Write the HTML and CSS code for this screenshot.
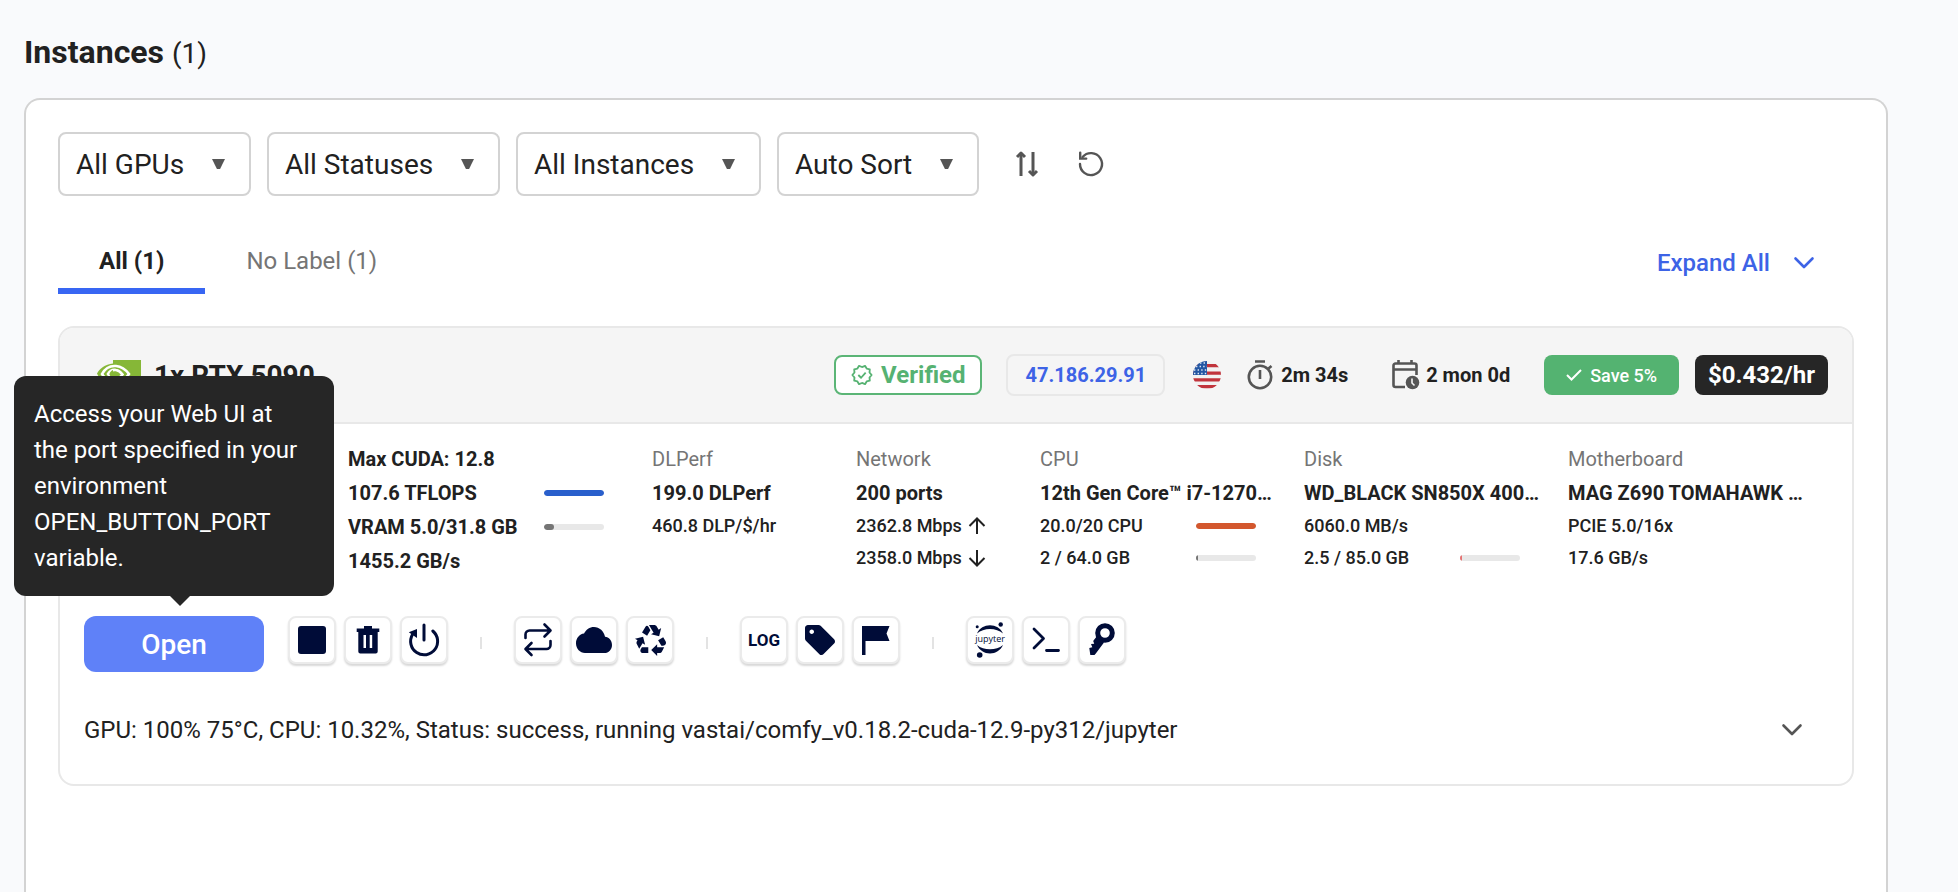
FILE: index.html
```html
<!DOCTYPE html>
<html lang="en">
<head>
  <meta charset="UTF-8">
  <meta name="viewport" content="width=device-width, initial-scale=1.0">
  <title>Instances</title>
  <link rel="stylesheet" href="styles.css">
</head>
<body>
  <h1>Instances <span class="count">(1)</span></h1>

  <main class="panel">
    <!-- Filters -->
    <div class="filters">
      <div class="select"><select aria-label="GPU"><option>All GPUs</option></select></div>
      <div class="select"><select aria-label="Status"><option>All Statuses</option></select></div>
      <div class="select"><select aria-label="Instance type"><option>All Instances</option></select></div>
      <div class="select"><select aria-label="Sort"><option>Auto Sort</option></select></div>
      <button class="tool-btn" aria-label="Reverse order">
        <svg width="24" height="26" viewBox="0 0 24 26" fill="none" stroke="#555" stroke-width="3"><path d="M6 25V3M18 1v22"/><path d="M2 6l4-4 4 4M14 20l4 4 4-4" stroke-linejoin="round"/></svg>
      </button>
      <button class="tool-btn" aria-label="Refresh">
        <svg width="26" height="26" viewBox="0 0 26 26" fill="none" stroke="#555" stroke-width="2.4" stroke-linecap="round"><path d="M2 13a11 11 0 1 0 2.6-7"/><path d="M2.2 1.6v6h6" /></svg>
      </button>
    </div>

    <!-- Tabs -->
    <div class="tabs">
      <button class="tab active">All (1)</button>
      <button class="tab">No Label (1)</button>
      <button class="expand">Expand All
        <svg width="20" height="12" viewBox="0 0 20 12" fill="none" stroke="currentColor" stroke-width="2.6" stroke-linecap="round" stroke-linejoin="round"><path d="M1.5 1.5L10 10l8.500-8.500"/></svg>
      </button>
    </div>

    <article class="card">
      <header class="card-header">
        <svg class="nvidia" width="44" height="30" viewBox="0 0 44 30">
          <path d="M16 0h28v30H16z" fill="#86b737"/>
          <path d="M16 3.500C8 4 2.500 9 0 13.500 3 20 9 26 16 27z" fill="#86b737"/>
          <g fill="none" stroke="#fff" stroke-width="2.600">
            <path d="M5 14C8 8.500 13 5.500 19 6c6 .5 10 4 13 8-4 6-9 9-14 9-6 0-10-4-13-9z"/>
            <path d="M11 14c2-3.500 5-4.500 8-4 3.500.5 5 2.500 6.500 4.500-2 3-4.500 4-7 4-4 0-6-2-7.500-4.500z"/>
          </g>
          <path d="M16 10v8c-2-.5-3-2-3.500-4 .5-2 2-3.500 3.500-4z" fill="#86b737"/>
        </svg>
        <h2>1x RTX 5090</h2>

        <span class="verified">
          <svg width="22" height="22" viewBox="0 0 24 24" fill="none" stroke="currentColor" stroke-width="2" stroke-linejoin="round"><path d="M22.500 12l-2.300-2.700.3-3.500-3.400-.8-1.800-3L12 3.300 8.800 2 7 5l-3.500.8.3 3.500L1.500 12l2.300 2.700-.3 3.500 3.500.8 1.800 3 3.200-1.300 3.300 1.300 1.800-3 3.400-.8-.3-3.500z"/><path d="M8 12l3 3 5-5.500"/></svg>
          Verified
        </span>
        <a class="ip" href="#">47.186.29.91</a>
        <svg class="us-flag" width="28" height="28" viewBox="0 0 28 28">
          <clipPath id="disc"><circle cx="14" cy="14" r="14"/></clipPath>
          <g clip-path="url(#disc)">
            <path d="M0 0h28v28H0z" fill="#f2f2f2"/>
            <path d="M0 4.700h28M0 12.200h28M0 18.900h28M0 25.600h28" stroke="#c1343c" stroke-width="3.300"/>
            <path d="M0 0h14v14H0z" fill="#2457a3"/>
            <path d="M3 5.500h11M1 9h13M1 12.500h13M7 2h7" stroke="#dfe8f5" stroke-width="1.400" stroke-dasharray="1.400 2.200"/>
          </g>
        </svg>
        <span class="time uptime">
          <svg width="28" height="30" viewBox="0 0 28 30" fill="none" stroke="#555" stroke-width="2.600"><circle cx="13" cy="17" r="11.200"/><path d="M8 1.500h10M13 10v9M21.500 8.500l3-2.500"/></svg>
          2m 34s
        </span>
        <span class="time left">
          <svg width="28" height="30" viewBox="0 0 28 30" fill="none" stroke="#555"><path d="M13 27H3.500a2 2 0 0 1-2-2V5.500a2 2 0 0 1 2-2h19a2 2 0 0 1 2 2V15" stroke-width="2.600"/><path d="M1.500 9.500h23M6.500 0v4M19.500 0v4" stroke-width="2.600"/><circle cx="20.500" cy="22.500" r="6.800" fill="#555" stroke="none"/><path d="M20 18.500v4.500l2.500 2.500" stroke="#f5f5f5" stroke-width="1.600"/></svg>
          2 mon 0d
        </span>
        <button class="save">
          <svg width="16" height="12" viewBox="0 0 16 12" fill="none" stroke="currentColor" stroke-width="2"><path d="M1 6l4.500 4.500L15 1"/></svg>
          Save 5%
        </button>
        <span class="price">$0.432/hr</span>
      </header>

      <div class="stats">
        <div class="stat gpu">
          <p class="strong">Max CUDA: 12.8</p>
          <p class="strong">107.6 TFLOPS <span class="bar"><i class="blue" style="width:100%"></i></span></p>
          <p class="strong">VRAM 5.0/31.8 GB <span class="bar"><i class="grey" style="width:16%"></i></span></p>
          <p class="strong">1455.2 GB/s</p>
        </div>
        <div class="stat">
          <p class="name">DLPerf</p>
          <p class="strong">199.0 DLPerf</p>
          <p>460.8 DLP/$/hr</p>
        </div>
        <div class="stat network">
          <p class="name">Network</p>
          <p class="strong">200 ports</p>
          <p>2362.8 Mbps <svg width="18" height="18" viewBox="0 0 18 18" fill="none" stroke="currentColor" stroke-width="2"><path d="M9 17V2M1.500 9L9 1.500 16.500 9"/></svg></p>
          <p>2358.0 Mbps <svg width="18" height="18" viewBox="0 0 18 18" fill="none" stroke="currentColor" stroke-width="2"><path d="M9 1v15M1.500 9L9 16.500 16.500 9"/></svg></p>
        </div>
        <div class="stat">
          <p class="name">CPU</p>
          <p class="strong">12th Gen Core™ i7-1270…</p>
          <p>20.0/20 CPU <span class="bar"><i class="orange" style="width:100%"></i></span></p>
          <p>2 / 64.0 GB <span class="bar"><i class="grey" style="width:3%"></i></span></p>
        </div>
        <div class="stat">
          <p class="name">Disk</p>
          <p class="strong">WD_BLACK SN850X 400…</p>
          <p>6060.0 MB/s</p>
          <p>2.5 / 85.0 GB <span class="bar"><i class="red" style="width:3%"></i></span></p>
        </div>
        <div class="stat">
          <p class="name">Motherboard</p>
          <p class="strong">MAG Z690 TOMAHAWK …</p>
          <p>PCIE 5.0/16x</p>
          <p>17.6 GB/s</p>
        </div>
      </div>

      <div class="actions">
        <div class="open-wrap">
          <button class="open" aria-describedby="open-tip">Open</button>
          <div class="tooltip" id="open-tip" role="tooltip">Access your Web UI at the port specified in your environment OPEN_BUTTON_PORT variable.</div>
        </div>

        <div class="group">
          <button class="icon-btn" aria-label="Stop">
            <svg width="32" height="32" viewBox="0 0 32 32"><rect x="2" y="2" width="28" height="28" rx="3"/></svg>
          </button>
          <button class="icon-btn" aria-label="Destroy">
            <svg width="32" height="32" viewBox="0 0 32 32"><path fill-rule="evenodd" d="M12 2h8v2.500h7.300V8h-1.600v19.500a2 2 0 0 1-2 2H8.300a2 2 0 0 1-2-2V8H4.700V4.500H12zM11.500 11v13H14V11zM17.700 11v13h2.500V11z"/></svg>
          </button>
          <button class="icon-btn" aria-label="Reboot">
            <svg width="32" height="32" viewBox="0 0 32 32"><g fill="none" stroke="#000c38" stroke-width="3" stroke-linecap="round"><path d="M16 1v15M24.800 7A13.500 13.500 0 1 1 4.500 10.500"/></g><path d="M.8 8.300L9 5v9z"/></svg>
          </button>
        </div>
        <span class="divider"></span>
        <div class="group">
          <button class="icon-btn" aria-label="Recreate">
            <svg width="32" height="32" viewBox="0 0 32 32"><g fill="none" stroke="#000c38" stroke-width="2.600" stroke-linecap="round" stroke-linejoin="round"><path d="M3.500 14v-3.500a4 4 0 0 1 4-4H28M22.500 0.500l6 6-6 6M28.500 17v4a4 4 0 0 1-4 4H4M9.500 19l-6 6 6 6"/></g></svg>
          </button>
          <button class="icon-btn" aria-label="Cloud copy">
            <svg width="36" height="26" viewBox="0 4 24 16" preserveAspectRatio="none"><path d="M19.350 10.040C18.670 6.590 15.640 4 12 4 9.110 4 6.600 5.640 5.350 8.040 2.340 8.360 0 10.910 0 14c0 3.310 2.690 6 6 6h13c2.760 0 5-2.240 5-5 0-2.640-2.050-4.780-4.650-4.960z"/></svg>
          </button>
          <button class="icon-btn" aria-label="Recycle">
            <svg width="31" height="31" viewBox="1 2 21 21"><path d="M5.770 7.150L7.200 4.780l1.030-1.710c.39-.65 1.330-.65 1.720 0l1.480 2.460-1.230 2.060-1 1.620-3.430-2.060zm15.950 5.820l-1.600-2.660-3.460 2L18.870 16H20c.76 0 1.450-.43 1.790-1.110.14-.28.21-.58.21-.89 0-.36-.1-.71-.28-1.030zM16 21h1.500c.76 0 1.450-.43 1.790-1.110L20.740 17H16v-2l-4 4 4 4v-2zm-6-4H5.700l-.84 1.410c-.3.5-.32 1.120-.06 1.650.28.57.87.94 1.520.94H10v-4zm-3.880-2.650l1.730 1.040L6.480 9.900 1 11.270l1.700 1.020-.41.69c-.35.59-.38 1.310-.07 1.920l1.630 3.260 2.270-3.810zm10.900-9.210l-1.300-2.170C15.350 2.370 14.700 2 14 2h-3.530l3.120 5.200-1.720 1.030 5.490 1.370 1.370-5.490-1.710 1.030z"/></svg>
          </button>
        </div>
        <span class="divider"></span>
        <div class="group">
          <button class="icon-btn log">LOG</button>
          <button class="icon-btn" aria-label="Label">
            <svg width="30" height="30" viewBox="2 2 20 20"><path d="M21.410 11.580l-9-9C12.050 2.220 11.550 2 11 2H4c-1.100 0-2 .9-2 2v7c0 .55.22 1.050.59 1.420l9 9c.36.36.86.58 1.410.58.55 0 1.050-.22 1.410-.59l7-7c.37-.36.59-.86.59-1.410 0-.55-.23-1.060-.59-1.420zM6.500 8C5.670 8 5 7.330 5 6.500S5.670 5 6.500 5 8 5.670 8 6.500 7.330 8 6.500 8z"/></svg>
          </button>
          <button class="icon-btn" aria-label="Report">
            <svg width="32" height="32" viewBox="0 0 32 32"><path d="M2 2h27.500l-3 7.500 3 7.500H5.500v14H2z"/></svg>
          </button>
        </div>
        <span class="divider"></span>
        <div class="group">
          <button class="icon-btn" aria-label="Jupyter">
            <svg width="32" height="32" viewBox="0 0 32 32"><circle cx="3.200" cy="2.800" r="1.500"/><circle cx="26.700" cy="0.500" r="2.200"/><circle cx="5.700" cy="31" r="2.800"/><path d="M3 9.500C5.500 4 10.500 1.300 16 1.300S26.500 4 29 9.500C25.500 6.500 21 5 16 5S6.500 6.500 3 9.500zM3 21c2.500 5.500 7.500 8.500 13 8.500S26.500 26.500 29 21c-3.500 3-8 4.300-13 4.300S6.500 24 3 21z"/><text x="16" y="17.500" text-anchor="middle" class="jupyter">jupyter</text></svg>
          </button>
          <button class="icon-btn" aria-label="Terminal">
            <svg width="32" height="32" viewBox="0 0 32 32"><path d="M4 5l9.500 9.500L4 24M16.500 26.500H28.500" fill="none" stroke="#000c38" stroke-width="2.800" stroke-linecap="round" stroke-linejoin="round"/></svg>
          </button>
          <button class="icon-btn" aria-label="SSH keys">
            <svg width="32" height="32" viewBox="0 0 32 32"><circle cx="19" cy="9" r="7.300" fill="none" stroke="#000c38" stroke-width="5"/><path d="M11 12l7 6.500L9.800 29.500l-1.300 1.500H4.300l-1-7 3-.8-1.300-3.200 3.200-.3-1-2.700z"/></svg>
          </button>
        </div>
      </div>

      <div class="status">
        <span>GPU: 100% 75°C, CPU: 10.32%, Status: success, running vastai/comfy_v0.18.2-cuda-12.9-py312/jupyter</span>
        <button class="toggle" aria-label="Show details">
          <svg width="20" height="12" viewBox="0 0 20 12" fill="none" stroke="#555" stroke-width="2.600" stroke-linecap="round" stroke-linejoin="round"><path d="M1.500 1.500L10 10l8.500-8.500"/></svg>
        </button>
      </div>
    </article>
  </main>
</body>
</html>
```
FILE: styles.css
```css
* {
  box-sizing: border-box;
}

body {
  margin: 0;
  min-height: 100vh;
  padding: 32px 70px 0 24px;
  display: flex;
  flex-direction: column;
  background-color: #f9fafc;
  color: #212121;
  font-family: Roboto, sans-serif;
  font-size: 24px;
}

button, select {
  font: inherit;
  color: inherit;
  cursor: pointer;
}

button {
  padding: 0;
  border: none;
  background: none;
}

svg {
  display: block;
  flex: none;
  overflow: visible;
}

h1, h2, p {
  margin: 0;
}

h1 {
  margin-bottom: 26px;
  font-size: 32px;
  line-height: 40px;
}

.count {
  font-size: 28px;
  line-height: 28px;
  font-weight: 400;
}

.panel {
  flex: 1;
  padding: 32px;
  border: 2px solid #d3d3d3;
  border-bottom: none;
  border-radius: 16px 16px 0 0;
  background-color: #fff;
}

/* Filters */
.filters {
  display: flex;
  align-items: center;
  gap: 16px;
}

.select {
  display: flex;
  position: relative;
}

.select select {
  height: 64px;
  padding: 0 64px 0 16px;
  border: 2px solid #d3d3d3;
  border-radius: 8px;
  background-color: #fff;
  appearance: none;
  font-size: 28px;
}

.select::after {
  content: "";
  position: absolute;
  top: 27px;
  right: 26px;
  width: 13px;
  height: 10px;
  background-color: #555;
  clip-path: polygon(0 0, 100% 0, 62% 100%, 38% 100%);
  pointer-events: none;
}

.tool-btn {
  display: flex;
  justify-content: center;
  width: 48px;
}

.tool-btn:first-of-type {
  margin-left: 8px;
}

/* Tabs */
.tabs {
  display: flex;
  margin: 36px 0 32px;
}

.tab {
  height: 62px;
  padding: 2px 41px 0;
  border-bottom: 6px solid transparent;
  color: #757575;
}

.tab.active {
  border-bottom-color: #3866f3;
  color: #212121;
  font-weight: 700;
}

.expand {
  display: flex;
  align-items: center;
  gap: 24px;
  margin-left: auto;
  margin-right: 40px;
  color: #3d63e6;
  font-weight: 500;
}

/* Instance card */
.card {
  padding-bottom: 36px;
  border: 2px solid #e8e8e8;
  border-radius: 16px;
}

.card-header {
  display: flex;
  align-items: center;
  height: 96px;
  padding: 0 24px 0 37px;
  border-bottom: 2px solid #e8e8e8;
  border-radius: 14px 14px 0 0;
  background-color: #f5f5f5;
}

h2 {
  margin-left: 13px;
  font-size: 28px;
  font-weight: 700;
}

.verified {
  display: flex;
  align-items: center;
  gap: 8px;
  height: 40px;
  margin-left: auto;
  padding: 0 15px;
  border: 2px solid #5bb576;
  border-radius: 8px;
  background-color: #fff;
  color: #56b272;
  font-weight: 700;
}

.ip {
  margin-left: 24px;
  padding: 0 17px;
  border: 2px solid #e8e8e8;
  border-radius: 8px;
  color: #3d63e6;
  font-size: 20px;
  font-weight: 700;
  line-height: 38px;
  text-decoration: none;
}

.us-flag {
  margin-left: 28px;
}

.time {
  display: flex;
  align-items: center;
  gap: 6px;
  font-size: 20px;
  font-weight: 700;
}

.uptime {
  margin-left: 26px;
}

.left {
  margin-left: 44px;
}

.save {
  display: flex;
  align-items: center;
  gap: 8px;
  height: 40px;
  margin-left: 34px;
  padding: 0 22px;
  border-radius: 8px;
  background-color: #54b371;
  color: #fff;
  font-size: 18px;
  font-weight: 500;
}

.price {
  margin-left: 16px;
  padding: 0 13px;
  border-radius: 8px;
  background-color: #262626;
  color: #fff;
  font-weight: 700;
  line-height: 40px;
}

/* Specs */
.stats {
  display: grid;
  grid-template-columns: 264fr 304fr 204fr 184fr 264fr 264fr 260fr;
  padding: 18px 24px 0;
}

.stat {
  min-width: 0;
}

.stat p {
  display: flex;
  align-items: center;
  justify-content: space-between;
  max-width: 216px;
  font-size: 18px;
  font-weight: 500;
  line-height: 32px;
  white-space: nowrap;
}

.gpu {
  grid-column: 2;
}

.stat.gpu p {
  max-width: 256px;
}

.stat.network p {
  justify-content: flex-start;
  gap: 6px;
}

.stat .name {
  color: #757575;
  font-size: 20px;
  font-weight: 400;
  line-height: 34px;
}

.stat .strong {
  max-width: 256px;
  font-size: 20px;
  font-weight: 700;
  line-height: 34px;
}

.bar {
  width: 60px;
  height: 6px;
  border-radius: 3px;
  background-color: #e8e8e8;
  overflow: hidden;
}

.bar i {
  display: block;
  height: 100%;
  border-radius: 3px;
}

.blue { background-color: #295fcc; }
.grey { background-color: #757575; }
.orange { background-color: #d3572e; }
.red { background-color: #e57373; }

/* Actions */
.actions {
  display: flex;
  align-items: flex-start;
  margin-top: 38px;
  padding: 0 24px;
}

.open-wrap {
  position: relative;
  margin-right: 24px;
}

.open {
  display: block;
  width: 180px;
  height: 56px;
  border-radius: 12px;
  background-color: #5f81f8;
  color: #fff;
  font-size: 28px;
  font-weight: 500;
}

.tooltip {
  position: absolute;
  bottom: 76px;
  left: -70px;
  width: 320px;
  padding: 20px 32px 20px 20px;
  border-radius: 12px;
  background-color: #262626;
  color: #fff;
  line-height: 36px;
}

.tooltip::after {
  content: "";
  position: absolute;
  top: 100%;
  left: 156px;
  border: 10px solid transparent;
  border-top-color: #262626;
  border-bottom: none;
}

.group {
  display: flex;
  gap: 8px;
}

.icon-btn {
  display: flex;
  align-items: center;
  justify-content: center;
  width: 48px;
  height: 48px;
  border: 2px solid #ebebeb;
  border-radius: 8px;
  background-color: #fff;
  box-shadow: 0 2px 2px #d8d8d8;
  color: #000c38;
  fill: #000c38;
}

.log {
  font-size: 17px;
  font-weight: 700;
}

.jupyter {
  font-family: "Open Sans", sans-serif;
  font-size: 9px;
  font-weight: 500;
}

.divider {
  width: 2px;
  height: 12px;
  margin: 21px 32px 0;
  background-color: #e3e3e3;
}

/* Status line */
.status {
  display: flex;
  align-items: center;
  justify-content: space-between;
  margin-top: 40px;
  padding: 0 50px 0 24px;
  line-height: 36px;
}
```
